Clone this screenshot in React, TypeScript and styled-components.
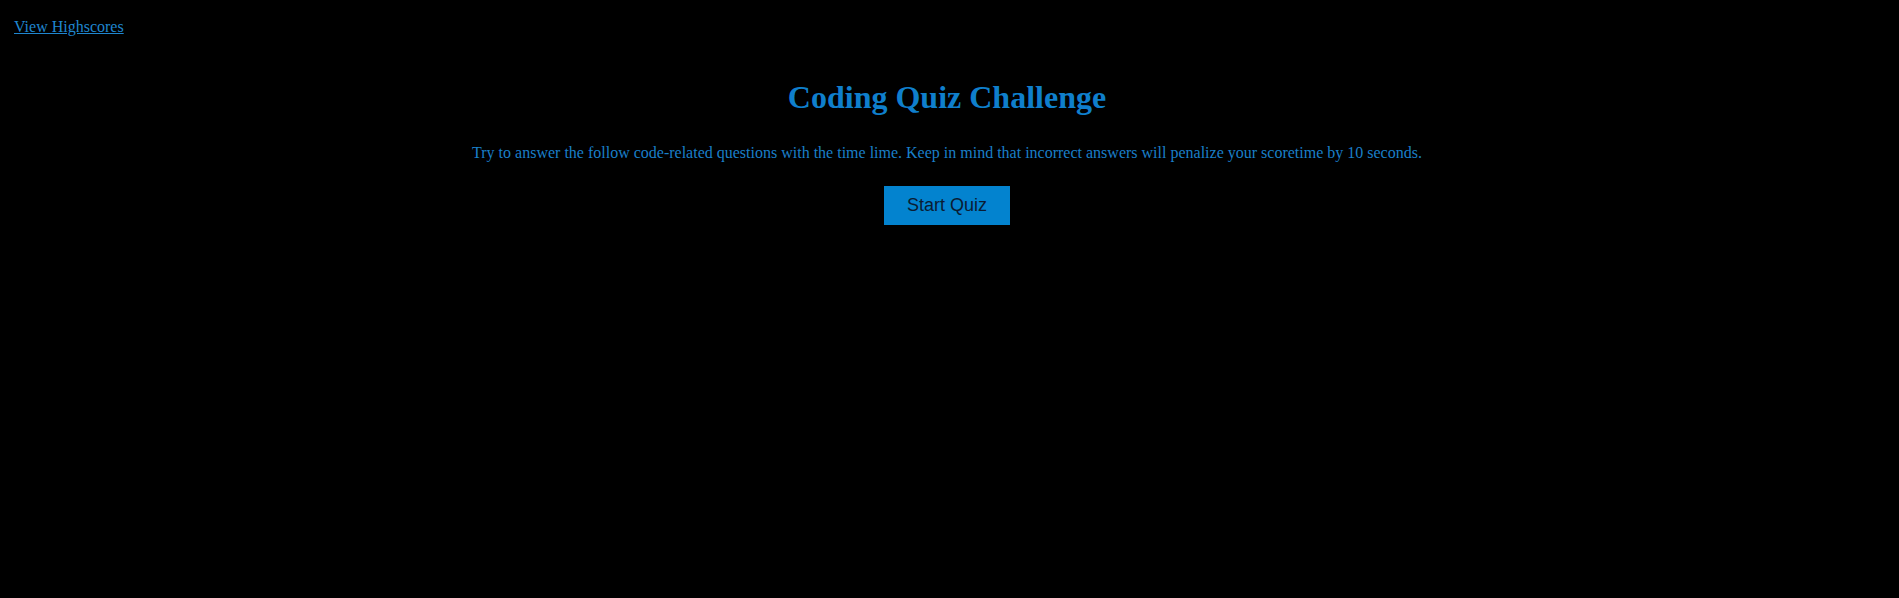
import React from "react";
import styled, { createGlobalStyle } from "styled-components";

const GlobalStyle = createGlobalStyle`
  html, body {
    margin: 0;
    padding: 0;
    background: #000000;
  }
  body {
    font-family: "Liberation Serif", "Times New Roman", serif;
    font-size: 16px;
    min-height: 598px;
  }
`;

const Page = styled.div`
  min-height: 598px;
  background: #000000;
  display: flex;
  flex-direction: column;
`;

const Header = styled.header`
  display: flex;
  justify-content: flex-start;
  padding: 18px 0 0 14px;
`;

const HighscoreLink = styled.a`
  color: #1f86cf;
  font-size: 16px;
  text-decoration: underline;
  cursor: pointer;
`;

const Main = styled.main`
  display: flex;
  flex-direction: column;
  align-items: center;
  text-align: center;
  padding-right: 5px;
`;

const Title = styled.h1`
  margin: 43px 0 28px;
  font-size: 32px;
  font-weight: bold;
  color: #0f7fcc;
`;

const Intro = styled.p`
  margin: 0 0 24px;
  font-size: 16px;
  color: #1a7fc8;
`;

const StartButton = styled.button`
  background: #0383cf;
  color: #0a1c33;
  border: none;
  font-family: "Liberation Sans", Arial, sans-serif;
  font-size: 18px;
  height: 39px;
  width: 126px;
  padding: 0;
  cursor: pointer;
`;

export default function App() {
  return (
    <Page>
      <GlobalStyle />
      <Header>
        <HighscoreLink href="#">View Highscores</HighscoreLink>
      </Header>
      <Main>
        <Title>Coding Quiz Challenge</Title>
        <Intro>
          Try to answer the follow code-related questions with the time lime. Keep in mind that
          incorrect answers will penalize your scoretime by 10 seconds.
        </Intro>
        <StartButton type="button">Start Quiz</StartButton>
      </Main>
    </Page>
  );
}
